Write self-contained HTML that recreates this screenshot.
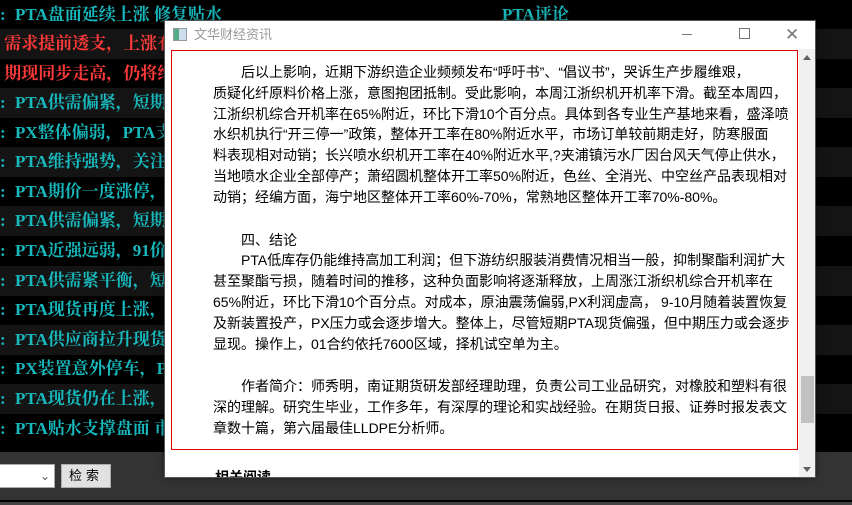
<!DOCTYPE html>
<html><head><meta charset="utf-8"><style>
*{margin:0;padding:0;box-sizing:border-box}
body{width:852px;height:505px;overflow:hidden;background:#000;position:relative;font-family:"Liberation Sans","Noto Sans CJK SC",sans-serif}
.row{position:absolute;left:0;width:852px;height:30px;font-family:"Liberation Serif","Noto Serif CJK SC",serif;font-weight:bold;font-size:17px;line-height:30px;color:#17b9bd;white-space:nowrap;overflow:hidden}
.row.d{background:#141414}
.row.r{color:#ff3a3a}
.row b{display:inline-block;width:15px}
.bottom{position:absolute;left:0;top:452px;width:852px;height:48px;background:#333}
.bline{position:absolute;left:0;top:500px;width:852px;height:5px;background:#444;border-top:2px solid #000}
.win{position:absolute;left:164px;top:20px;width:652px;height:458px;background:#fff;border:1px solid #555;box-shadow:0 0 6px rgba(0,0,0,.5);overflow:hidden}
.title{position:absolute;left:0;top:0;width:650px;height:27px;font-size:13px;color:#999;line-height:27px}
.cont{position:absolute;left:6px;top:29px;width:627px;height:400px;border:1px solid #e00000}
.t{position:absolute;left:48px;font-size:14px;color:#000;white-space:nowrap;line-height:20.8px}
.sb{position:absolute;left:634px;top:28px;width:17px;height:430px;background:#f0f0f0}
</style></head><body>
<div class="row" style="top:0"><b>:</b>PTA盘面延续上涨 修复贴水<span style="position:absolute;left:502px">PTA评论</span></div>
<div class="row d r" style="top:29px">&nbsp;需求提前透支，上涨有限</div>
<div class="row r" style="top:59px">&nbsp;期现同步走高，仍将维持</div>
<div class="row d" style="top:88px"><b>:</b>PTA供需偏紧，短期支撑</div>
<div class="row" style="top:118px"><b>:</b>PX整体偏弱，PTA支撑</div>
<div class="row d" style="top:147px"><b>:</b>PTA维持强势，关注上方</div>
<div class="row" style="top:177px"><b>:</b>PTA期价一度涨停，多头</div>
<div class="row d" style="top:206px"><b>:</b>PTA供需偏紧，短期支撑</div>
<div class="row" style="top:236px"><b>:</b>PTA近强远弱，91价差</div>
<div class="row d" style="top:266px"><b>:</b>PTA供需紧平衡，短期</div>
<div class="row" style="top:295px"><b>:</b>PTA现货再度上涨，现货</div>
<div class="row d" style="top:325px"><b>:</b>PTA供应商拉升现货 价格</div>
<div class="row" style="top:354px"><b>:</b>PX装置意外停车，PTA</div>
<div class="row d" style="top:384px"><b>:</b>PTA现货仍在上涨，短期</div>
<div class="row" style="top:414px"><b>:</b>PTA贴水支撑盘面 市场</div>
<div class="bottom">
<div style="position:absolute;left:-2px;top:12px;width:57px;height:24px;background:#fff;border:1px solid #aaa;font-size:12px;color:#555;text-align:right;padding-right:4px;line-height:22px">&#8964;</div>
<div style="position:absolute;left:61px;top:12px;width:50px;height:24px;background:#e1e1e1;border:1px solid #adadad;font-size:13px;line-height:22px;text-align:center;letter-spacing:4px;color:#000">检索</div>
</div>
<div class="bline"></div>
<div class="win">
<div class="title"><span style="position:absolute;left:8px;top:7px;width:14px;height:13px;border:1px solid #999;background:linear-gradient(90deg,#5a8 0 40%,#cde 40%)"></span><span style="position:absolute;left:29px">文华财经资讯</span>
<span style="position:absolute;left:517px;top:13px;width:10px;height:1px;background:#777"></span>
<span style="position:absolute;left:574px;top:7px;width:11px;height:11px;border:1px solid #777"></span>
<span style="position:absolute;left:620px;top:0;font-size:17px;color:#777">✕</span></div>
<div class="cont"></div>
<div class="t" style="top:41px;left:76px">后以上影响，近期下游织造企业频频发布“呼吁书”、“倡议书”，哭诉生产步履维艰，</div>
<div class="t" style="top:61.8px">质疑化纤原料价格上涨，意图抱团抵制。受此影响，本周江浙织机开机率下滑。截至本周四，</div>
<div class="t" style="top:82.6px">江浙织机综合开机率在65%附近，环比下滑10个百分点。具体到各专业生产基地来看，盛泽喷</div>
<div class="t" style="top:103.4px">水织机执行“开三停一”政策，整体开工率在80%附近水平，市场订单较前期走好，防寒服面</div>
<div class="t" style="top:124.2px">料表现相对动销；长兴喷水织机开工率在40%附近水平,?夹浦镇污水厂因台风天气停止供水，</div>
<div class="t" style="top:145px">当地喷水企业全部停产；萧绍圆机整体开工率50%附近，色丝、全消光、中空丝产品表现相对</div>
<div class="t" style="top:165.8px">动销；经编方面，海宁地区整体开工率60%-70%，常熟地区整体开工率70%-80%。</div>
<div class="t" style="top:208.5px;left:76px">四、结论</div>
<div class="t" style="top:229.3px;left:76px">PTA低库存仍能维持高加工利润；但下游纺织服装消费情况相当一般，抑制聚酯利润扩大</div>
<div class="t" style="top:250.1px">甚至聚酯亏损，随着时间的推移，这种负面影响将逐渐释放，上周涨江浙织机综合开机率在</div>
<div class="t" style="top:270.9px">65%附近，环比下滑10个百分点。对成本，原油震荡偏弱,PX利润虚高， 9-10月随着装置恢复</div>
<div class="t" style="top:291.7px">及新装置投产，PX压力或会逐步增大。整体上，尽管短期PTA现货偏强，但中期压力或会逐步</div>
<div class="t" style="top:312.5px">显现。操作上，01合约依托7600区域，择机试空单为主。</div>
<div class="t" style="top:355px;left:76px">作者简介：师秀明，南证期货研发部经理助理，负责公司工业品研究，对橡胶和塑料有很</div>
<div class="t" style="top:375.8px">深的理解。研究生毕业，工作多年，有深厚的理论和实战经验。在期货日报、证券时报发表文</div>
<div class="t" style="top:396.6px">章数十篇，第六届最佳LLDPE分析师。</div>
<div class="t" style="top:446px;left:50px;font-weight:bold;font-size:14px">相关阅读</div>
<div class="sb">
<div style="position:absolute;left:4px;top:6px;border:4px solid transparent;border-bottom:5px solid #606060;border-top:0"></div>
<div style="position:absolute;left:2px;top:327px;width:13px;height:47px;background:#c1c1c1"></div>
<div style="position:absolute;left:4px;top:418px;border:4px solid transparent;border-top:5px solid #606060;border-bottom:0"></div>
</div>
</div>
</body></html>
